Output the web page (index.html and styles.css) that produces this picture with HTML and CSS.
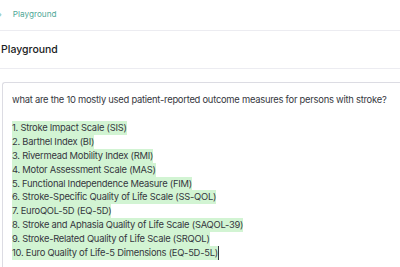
FILE: index.html
```html
<!DOCTYPE html>
<html lang="en">
<head>
    <meta charset="UTF-8">
    <title>Playground</title>
    <link rel="stylesheet" href="styles.css">
</head>
<body>
    <div class="crumbs">
        <span class="sep">›</span>
        <span class="crumb">Playground</span>
    </div>
    <div class="title-bar">
        <h1>Playground</h1>
    </div>
    <div class="editor">
        <p class="prompt">what are the 10 mostly used patient-reported outcome measures for persons with stroke?</p>
        <div class="completion">
            <span class="hl">1. Stroke Impact Scale (SIS)</span>
            <span class="hl">2. Barthel Index (BI)</span>
            <span class="hl">3. Rivermead Mobility Index (RMI)</span>
            <span class="hl">4. Motor Assessment Scale (MAS)</span>
            <span class="hl">5. Functional Independence Measure (FIM)</span>
            <span class="hl">6. Stroke-Specific Quality of Life Scale (SS-QOL)</span>
            <span class="hl">7. EuroQOL-5D (EQ-5D)</span>
            <span class="hl">8. Stroke and Aphasia Quality of Life Scale (SAQOL-39)</span>
            <span class="hl">9. Stroke-Related Quality of Life Scale (SRQOL)</span>
            <span class="hl last">10. Euro Quality of Life-5 Dimensions (EQ-5D-5L)</span>
        </div>
    </div>
</body>
</html>
```

FILE: styles.css
```css
* {
    margin: 0;
    padding: 0;
    box-sizing: border-box;
}

html, body {
    height: 100%;
}

body {
    font-family: "Inter", "Noto Sans", sans-serif;
    background-color: #fff;
    display: flex;
    flex-direction: column;
    overflow: hidden;
}

.crumbs {
    height: 31px;
    flex-shrink: 0;
    display: flex;
    align-items: center;
    gap: 11px;
    padding-bottom: 3px;
    font-size: 8.2px;
    color: #4fa897;
    border-bottom: 1px solid #ececf1;
}

.sep {
    margin-left: -2px;
    font-size: 10px;
    color: #7fc4b6;
}

.title-bar {
    height: 38px;
    flex-shrink: 0;
    display: flex;
    align-items: center;
    padding-left: 1px;
    border-bottom: 1px solid #ececf1;
}

h1 {
    font-size: 10.5px;
    font-weight: 500;
    color: #202123;
}

.editor {
    flex: 1;
    margin: 13px 0 0 2px;
    border: 1px solid #dcdce3;
    border-right: none;
    border-bottom: none;
    border-radius: 3px 0 0 0;
    padding: 10px 0 0 9px;
    font-size: 9.4px;
    letter-spacing: -0.25px;
    line-height: 13.9px;
    color: #353740;
}

.prompt {
    margin-bottom: 14px;
}

.completion {
    display: flex;
    flex-direction: column;
    align-items: flex-start;
}

.hl {
    background-color: #d2f4d3;
}

.last {
    border-right: 1px solid #353740;
}
```
